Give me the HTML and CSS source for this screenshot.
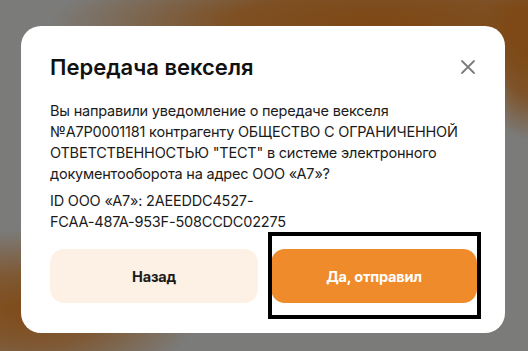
FILE: index.html
```html
<!DOCTYPE html>
<html lang="ru">
<head>
    <meta charset="UTF-8">
    <meta name="viewport" content="width=device-width, initial-scale=1.0">
    <title>Передача векселя</title>
    <link rel="stylesheet" href="styles.css">
</head>
<body>
    <div class="backdrop">
        <div class="modal">
            <div class="modal-header">
                <h2 class="modal-title">Передача векселя</h2>
                <button class="close-btn" aria-label="Закрыть">
                    <svg width="16" height="16" viewBox="0 0 16 16">
                        <path d="M2 2 L14 14 M14 2 L2 14" stroke="#7c7c7c" stroke-width="1.8" stroke-linecap="round" fill="none"/>
                    </svg>
                </button>
            </div>
            <p class="modal-text">Вы направили уведомление о передаче векселя №A7P0001181 контрагенту ОБЩЕСТВО С ОГРАНИЧЕННОЙ ОТВЕТСТВЕННОСТЬЮ "ТЕСТ" в системе электронного документооборота на адрес ООО «А7»?</p>
            <p class="modal-text">ID ООО «А7»: 2AEEDDC4527-<span class="nowrap">FCAA-487A-953F-508CCDC02275</span></p>
            <div class="modal-actions">
                <button class="btn btn-secondary">Назад</button>
                <div class="highlight-wrap">
                    <button class="btn btn-primary">Да, отправил</button>
                    <span class="highlight"></span>
                </div>
            </div>
        </div>
    </div>
</body>
</html>
```

FILE: styles.css
```css
* {
    box-sizing: border-box;
}
body {
    margin: 0;
    font-family: Inter, "Noto Sans", sans-serif;
    color: #1b1b1b;
}
.backdrop {
    width: 528px;
    height: 351px;
    overflow: hidden;
    padding: 26px 0 0 21px;
    background:
        radial-gradient(ellipse 330px 60px at 380px 22px, rgba(126, 72, 20, 1) 0%, rgba(126, 72, 20, 0.85) 45%, rgba(126, 72, 20, 0) 100%),
        radial-gradient(ellipse 50px 90px at 528px 50px, rgba(126, 72, 20, 1) 0%, rgba(126, 72, 20, 0.8) 50%, rgba(126, 72, 20, 0) 100%),
        radial-gradient(ellipse 170px 80px at 30px 310px, rgba(128, 74, 22, 1) 0%, rgba(128, 74, 22, 0.7) 45%, rgba(128, 74, 22, 0) 100%),
        #7b7b79;
}
.modal {
    width: 484px;
    height: 307px;
    background-color: #fff;
    border-radius: 20px;
    padding: 27px 28px 0 29px;
}
.modal-header {
    display: flex;
    align-items: center;
    justify-content: space-between;
    margin-bottom: 19px;
}
.modal-title {
    margin: 0;
    font-size: 22px;
    line-height: 28px;
    font-weight: 600;
    color: #111;
}
.close-btn {
    background: none;
    border: none;
    padding: 0;
    width: 16px;
    height: 16px;
    margin-right: 1px;
    display: flex;
}
.modal-text {
    margin: 0 0 6px;
    font-size: 14.5px;
    line-height: 21px;
    letter-spacing: -0.2px;
    color: #1b1b1b;
}
.nowrap {
    white-space: nowrap;
}
.modal-actions {
    display: flex;
    gap: 13px;
    margin-top: 17px;
}
.btn {
    height: 54px;
    border: none;
    border-radius: 14px;
    font-family: inherit;
    font-size: 14.5px;
    font-weight: 700;
    letter-spacing: -0.2px;
}
.btn-secondary {
    width: 208px;
    background-color: #fdf1e5;
    color: #1b1b1b;
}
.highlight-wrap {
    position: relative;
    width: 206px;
}
.btn-primary {
    position: relative;
    z-index: 1;
    width: 206px;
    background-color: #f08b2b;
    color: #fff;
}
.highlight {
    position: absolute;
    left: -3px;
    right: -4px;
    top: -17px;
    bottom: -16px;
    border: 4px solid #000;
    z-index: 2;
}
```
